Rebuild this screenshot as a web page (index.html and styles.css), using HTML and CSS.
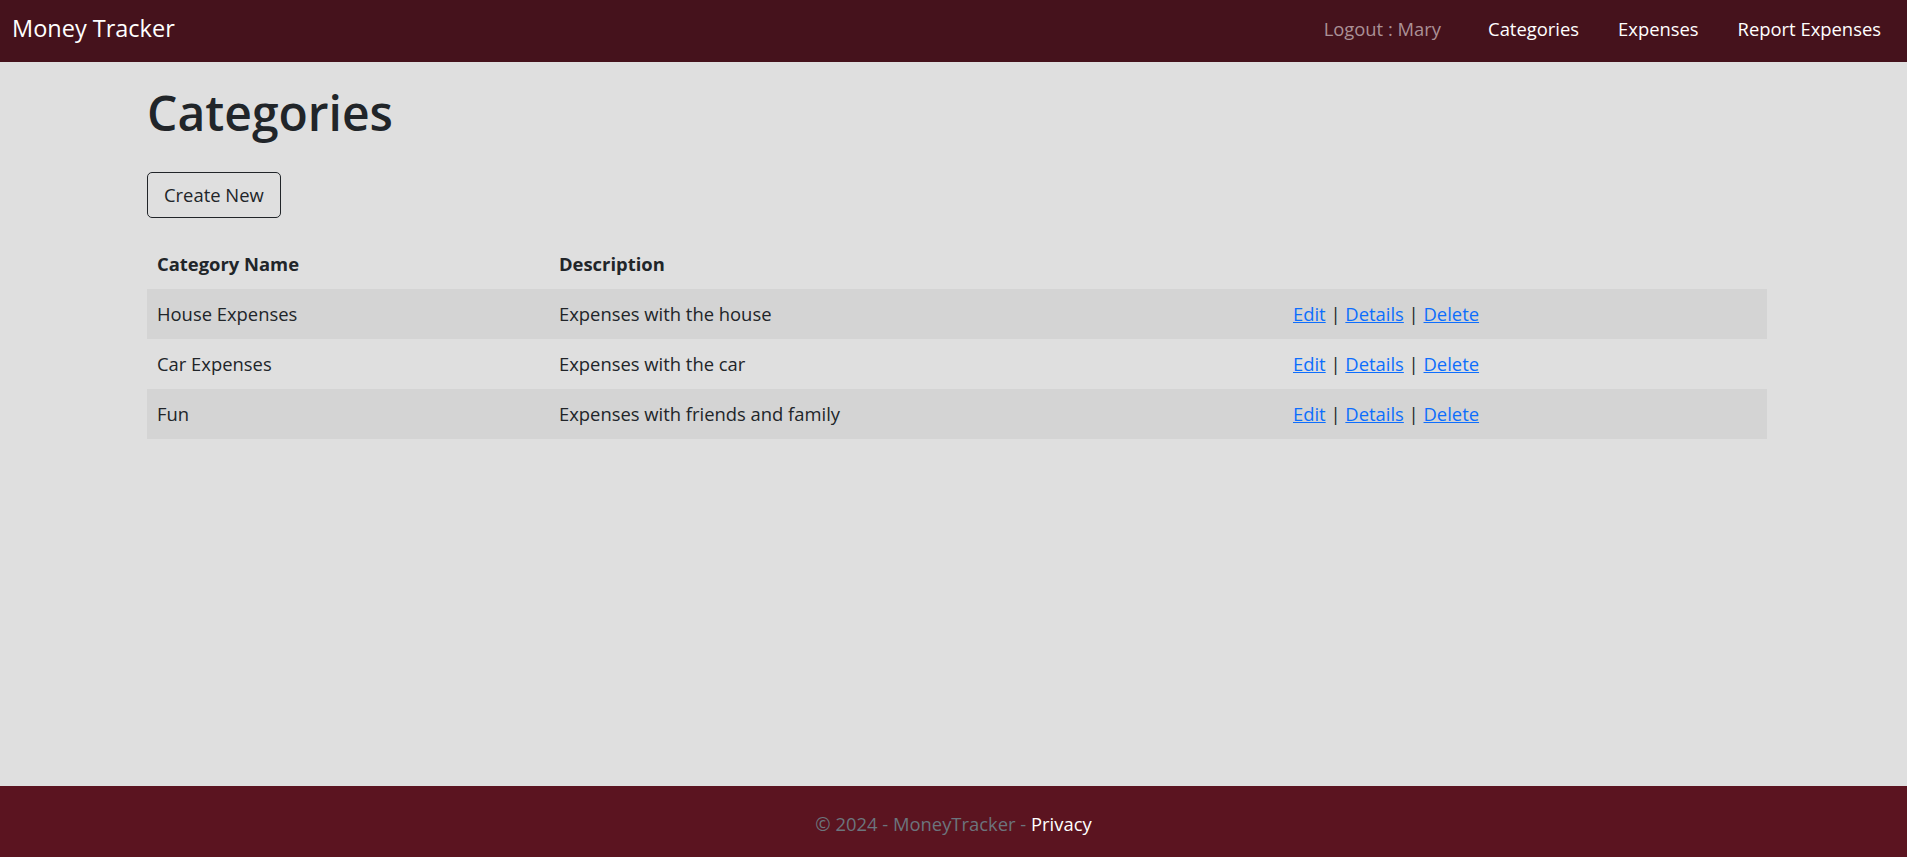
FILE: index.html
```html
<!DOCTYPE html>
<html lang="en">
<head>
<meta charset="utf-8">
<title>Categories - MoneyTracker</title>
<link rel="stylesheet" href="styles.css">
</head>
<body>
<header class="navbar">
  <a class="brand" href="#">Money Tracker</a>
  <nav class="nav">
    <a class="nav-link muted" href="#">Logout : Mary</a>
    <a class="nav-link" href="#">Categories</a>
    <a class="nav-link" href="#">Expenses</a>
    <a class="nav-link" href="#">Report Expenses</a>
  </nav>
</header>
<main class="container">
  <h1 class="title">Categories</h1>
  <p class="actions"><a class="btn" href="#">Create New</a></p>
  <table class="table">
    <colgroup>
      <col class="c1"><col class="c2"><col class="c3">
    </colgroup>
    <thead>
      <tr><th>Category Name</th><th>Description</th><th></th></tr>
    </thead>
    <tbody>
      <tr class="odd"><td>House Expenses</td><td>Expenses with the house</td><td><a href="#">Edit</a> | <a href="#">Details</a> | <a href="#">Delete</a></td></tr>
      <tr><td>Car Expenses</td><td>Expenses with the car</td><td><a href="#">Edit</a> | <a href="#">Details</a> | <a href="#">Delete</a></td></tr>
      <tr class="odd"><td>Fun</td><td>Expenses with friends and family</td><td><a href="#">Edit</a> | <a href="#">Details</a> | <a href="#">Delete</a></td></tr>
    </tbody>
  </table>
</main>
<footer class="footer">
  <span>&copy; 2024 - MoneyTracker - <a href="#" class="footer-link">Privacy</a></span>
</footer>
</body>
</html>
```
FILE: styles.css
```css
* { box-sizing: border-box; }
html, body { height: 100%; }
body {
  margin: 0;
  min-height: 100vh;
  display: flex;
  flex-direction: column;
  background: #dfdfdf;
  color: #212529;
  font-family: "Open Sans", "Noto Sans", sans-serif;
  font-size: 19.2px;
  line-height: 1.5;
}
.navbar {
  height: 62px;
  background: #45121c;
  display: flex;
  align-items: center;
  justify-content: space-between;
  padding: 0 26px 0 12px;
  flex-shrink: 0;
}
.brand {
  color: #fff;
  text-decoration: none;
  font-size: 23.5px;
  line-height: 1;
  padding-bottom: 4px;
}
.nav {
  display: flex;
  gap: 39px;
  align-items: center;
  padding-bottom: 4px;
}
.nav-link {
  color: #fff;
  text-decoration: none;
  font-size: 18.4px;
}
.nav-link.muted { color: #ab9096; margin-right: 8px; }
.container {
  width: 1620px;
  margin: 0 0 0 147px;
  flex: 1 0 auto;
}
.title {
  margin: 22px 0 0;
  font-size: 48px;
  font-weight: 600;
  line-height: 1.2;
}
.actions { margin: 30px 0 21px; line-height: 1; }
.btn {
  display: inline-block;
  height: 46px;
  padding: 0 16px;
  border: 1px solid #212529;
  border-radius: 5px;
  color: #212529;
  text-decoration: none;
  font-size: 18.4px;
  line-height: 44px;
}
.table {
  width: 1620px;
  border-collapse: collapse;
}
.c1 { width: 402px; }
.c2 { width: 734px; }
.c3 { width: 484px; }
.table th, .table td {
  height: 50px;
  padding: 0 10px;
  text-align: left;
  vertical-align: middle;
  font-size: 18.4px;
}
.table th { font-weight: 700; }
.table tr.odd td { background: #d4d4d4; }
.table a { color: #0d6efd; }
.sep { margin: 0 1px; }
.footer {
  height: 71px;
  background: #5b1420;
  color: #6c757d;
  display: flex;
  align-items: center;
  justify-content: center;
  font-size: 18.4px;
  flex-shrink: 0;
  padding-top: 5px;
}
.footer-link { color: #fff; text-decoration: none; }
```
